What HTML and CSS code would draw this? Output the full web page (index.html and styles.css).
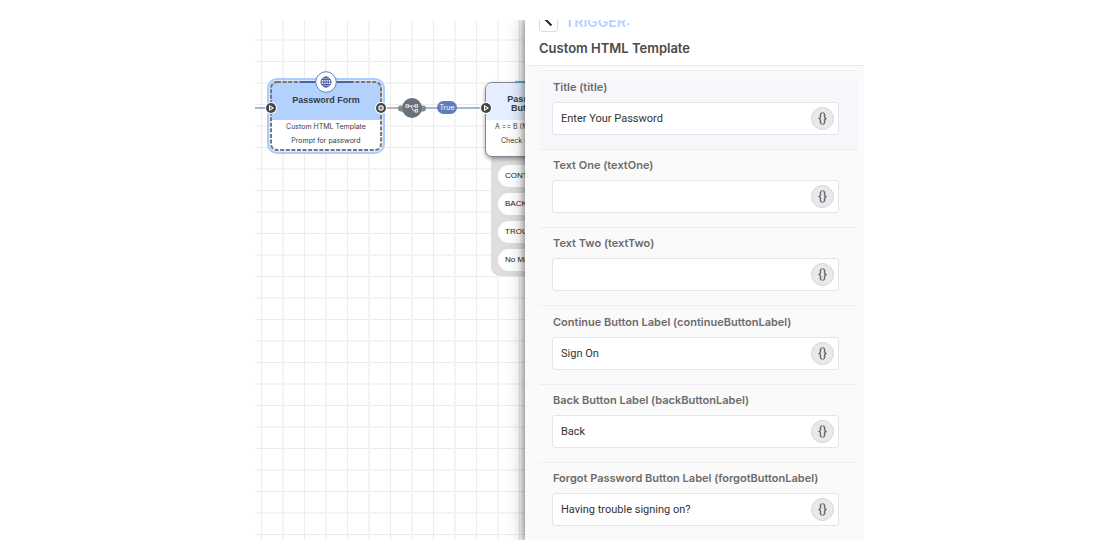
FILE: index.html
```html
<!DOCTYPE html>
<html lang="en">
<head>
<meta charset="utf-8">
<title>Flow editor</title>
<link rel="stylesheet" href="styles.css">
</head>
<body>
<main class="frame">
  <section class="canvas" aria-label="Flow canvas">
    <span class="wire wire-in"></span>
    <span class="wire wire-out"></span>
    <span class="wire wire-true"></span>

    <article class="node node-form">
      <header class="node-head">Password Form</header>
      <p class="node-line">Custom HTML Template</p>
      <p class="node-line">Prompt for password</p>
    </article>
    <svg class="dashes" viewBox="0 0 112 70" aria-hidden="true">
      <rect x="1" y="1" width="110" height="68" rx="6" fill="none" stroke="#74787e" stroke-width="2" stroke-dasharray="4 1.6"/>
    </svg>
    <span class="accent accent-form"></span>
    <svg class="globe" viewBox="0 0 22 22" aria-hidden="true">
      <circle cx="11" cy="11" r="10.3" fill="#fff" stroke="#6480bd" stroke-width="1"/>
      <g fill="none" stroke="#4257ab" stroke-width="1">
        <circle cx="11" cy="11" r="5"/>
        <ellipse cx="11" cy="11" rx="2.3" ry="5"/>
        <path d="M11 6v10M6 11h10M6.8 8.4h8.4M6.8 13.6h8.4"/>
      </g>
    </svg>

    <ul class="branches">
      <li class="branch">CONTINUE</li>
      <li class="branch">BACK</li>
      <li class="branch">TROUBLE</li>
      <li class="branch">No Match</li>
    </ul>
    <article class="node node-branch">
      <header class="node-head">Password Form<br>Button Values</header>
      <p class="node-line node-rule">A == B (Multiple Branch)</p>
      <p class="node-line node-note">Check which button</p>
    </article>
    <span class="accent accent-branch"></span>

    <svg class="port port-in" viewBox="0 0 12 12" aria-hidden="true">
      <circle cx="6" cy="6" r="6" fill="#fff"/><circle cx="6" cy="6" r="5" fill="#444"/>
      <path d="M4.5 3.6v4.8L8.4 6z" fill="#777" stroke="#fff" stroke-width="1"/>
    </svg>
    <svg class="port port-out" viewBox="0 0 12 12" aria-hidden="true">
      <circle cx="6" cy="6" r="6" fill="#fff"/><circle cx="6" cy="6" r="5" fill="#444"/>
      <circle cx="6" cy="6" r="2.2" fill="#777" stroke="#fff" stroke-width="1.1"/>
    </svg>
    <svg class="port port-next" viewBox="0 0 12 12" aria-hidden="true">
      <circle cx="6" cy="6" r="6" fill="#fff"/><circle cx="6" cy="6" r="5" fill="#444"/>
      <path d="M4.5 3.6v4.8L8.4 6z" fill="#777" stroke="#fff" stroke-width="1"/>
    </svg>

    <svg class="splitter" viewBox="0 0 28 20" aria-hidden="true">
      <rect x="0" y="7.4" width="28" height="6" rx="2.4" fill="#8b8b8b"/>
      <circle cx="14" cy="10" r="10" fill="#69717b"/>
      <g fill="none" stroke="#e8eaec" stroke-width="1">
        <rect x="8" y="6.8" width="2.4" height="2.4"/>
        <rect x="17.2" y="6.8" width="2.4" height="2.4"/>
        <rect x="17.2" y="11.6" width="2.4" height="2.4"/>
        <path d="M10.4 8H17.2M12.4 8c1.6 0 1.6 4.8 3.4 4.8h1.4"/>
      </g>
    </svg>
    <span class="tag">True</span>
  </section>

  <aside class="panel">
    <header class="panel-head">
      <div class="crumb">
        <button class="back" type="button" aria-label="Back">
          <svg viewBox="0 0 17 17" aria-hidden="true"><path d="M11.5 .5L6 6l5.5 5.5" fill="none" stroke="#222" stroke-width="2"/></svg>
        </button>
        <span class="kind">TRIGGER:</span>
      </div>
      <h1 class="panel-title">Custom HTML Template</h1>
    </header>
    <form class="fields">
      <div class="field field-active">
        <label class="label" for="title">Title (title)</label>
        <div class="box"><input class="input" id="title" type="text" value="Enter Your Password"><button class="braces" type="button" aria-label="Insert variable">{}</button></div>
      </div>
      <div class="field">
        <label class="label" for="textOne">Text One (textOne)</label>
        <div class="box"><input class="input" id="textOne" type="text"><button class="braces" type="button" aria-label="Insert variable">{}</button></div>
      </div>
      <div class="field">
        <label class="label" for="textTwo">Text Two (textTwo)</label>
        <div class="box"><input class="input" id="textTwo" type="text"><button class="braces" type="button" aria-label="Insert variable">{}</button></div>
      </div>
      <div class="field">
        <label class="label" for="continueLabel">Continue Button Label (continueButtonLabel)</label>
        <div class="box"><input class="input" id="continueLabel" type="text" value="Sign On"><button class="braces" type="button" aria-label="Insert variable">{}</button></div>
      </div>
      <div class="field">
        <label class="label" for="backLabel">Back Button Label (backButtonLabel)</label>
        <div class="box"><input class="input" id="backLabel" type="text" value="Back"><button class="braces" type="button" aria-label="Insert variable">{}</button></div>
      </div>
      <div class="field">
        <label class="label" for="forgotLabel">Forgot Password Button Label (forgotButtonLabel)</label>
        <div class="box"><input class="input" id="forgotLabel" type="text" value="Having trouble signing on?"><button class="braces" type="button" aria-label="Insert variable">{}</button></div>
      </div>
    </form>
  </aside>
</main>
</body>
</html>
```
FILE: styles.css
```css
* { box-sizing: border-box; }

body {
  margin: 0;
  padding: 20px 0;
  height: 100vh;
  display: grid;
  grid-template-columns: 255fr 609fr 256fr;
  grid-template-rows: minmax(0, 1fr);
  background: #fff;
  font-family: Inter, "Liberation Sans", sans-serif;
}

.frame {
  grid-column: 2;
  display: flex;
  overflow: hidden;
}

/* Flow canvas */
.canvas {
  position: relative;
  flex: 1;
  min-width: 0;
  background-color: #fff;
  background-image:
    linear-gradient(90deg, #ececec 1px, transparent 1px),
    linear-gradient(90deg, #f4f4f4 2px, transparent 2px),
    linear-gradient(#ececec 1px, transparent 1px),
    linear-gradient(#f4f4f4 2px, transparent 2px);
  background-size: 43px 43px;
  background-position: 6px 0, 27px 0, 0 41px, 0 19px;
  font-family: "Liberation Sans", Arial, sans-serif;
  color: #333d4a;
}

.wire { position: absolute; height: 2px; top: 87px; background: #a5b7dc; }
.wire-in { left: 0; width: 12px; }
.wire-out { left: 130px; width: 18px; background: #b5b5b5; }
.wire-true { left: 166px; width: 60px; }

.node {
  position: absolute;
  width: 112px;
  background: #fff;
  border-radius: 7px;
  text-align: center;
  white-space: nowrap;
}
.node-form {
  left: 15px;
  top: 61px;
  height: 70px;
  box-shadow: 0 0 0 1px #e4e8ee, 0 0 0 3px #a9cbff;
}
.dashes { position: absolute; left: 15px; top: 61px; width: 112px; height: 70px; }
.node-branch {
  left: 230px;
  top: 62px;
  height: 75px;
  border: 1px solid #7f8894;
  box-shadow: 0 2px 4px rgba(0, 0, 0, .35);
}
.node-head {
  display: flex;
  align-items: center;
  justify-content: center;
  height: 39px;
  border-radius: 6px 6px 0 0;
  background: #b3d1fd;
  font-size: 9px;
  line-height: 9px;
  font-weight: 700;
}
.node-branch .node-head { height: 37px; padding-top: 5px; background: #e6efff; }
.node-line {
  margin: 0;
  font-family: Inter, "Liberation Sans", sans-serif;
  font-size: 7px;
  line-height: 14px;
}
.node-rule, .node-note { text-align: left; }
.node-rule { padding-left: 9px; }
.node-note { padding-left: 15px; }

.accent { position: absolute; top: 61px; height: 2px; }
.accent-form { left: 45px; width: 53px; background: #4166b4; }
.accent-branch { left: 260px; width: 53px; background: #5ba3d9; }
.globe { position: absolute; left: 60px; top: 51px; width: 22px; height: 22px; }

.port { position: absolute; top: 82px; width: 12px; height: 12px; }
.port-in { left: 10px; }
.port-out { left: 120px; }
.port-next { left: 225px; }

.splitter { position: absolute; left: 143px; top: 78px; width: 28px; height: 20px; }
.tag {
  position: absolute;
  left: 182px;
  top: 81px;
  width: 20px;
  height: 13px;
  border-radius: 7px;
  background: #5e7db9;
  color: #fff;
  font-family: Inter, "Liberation Sans", sans-serif;
  font-size: 7px;
  line-height: 13px;
  text-align: center;
}

.branches {
  position: absolute;
  left: 236px;
  top: 130px;
  width: 100px;
  margin: 0;
  padding: 15px 7px 5px;
  display: grid;
  gap: 6px;
  list-style: none;
  background: #dedede;
  border-radius: 9px;
}
.branch {
  height: 22px;
  padding-left: 7px;
  border-radius: 11px;
  background: #fff;
  font-size: 8px;
  line-height: 22px;
  color: #222;
}

/* Settings panel */
.panel {
  position: relative;
  display: flex;
  flex-direction: column;
  flex: 0 0 339px;
  background: #fafafa;
  box-shadow: 0 0 6px 2px rgba(0, 0, 0, .3), 0 0 18px rgba(0, 0, 0, .3);
}
.panel-head {
  margin-top: -7px;
  padding: 0 14px 9px;
  border-bottom: 1px solid #ebebeb;
  background: #fff;
}
.crumb { display: flex; align-items: center; gap: 7px; height: 18px; }
.back {
  width: 19px;
  height: 19px;
  padding: 0;
  border: 1px solid #d9dbe0;
  border-radius: 3px;
  background: #fff;
}
.back svg { display: block; }
.kind { font-size: 14px; line-height: 16px; font-weight: 600; color: #b5d2ff; }
.panel-title {
  margin: 9px 0 0;
  font-size: 13px;
  line-height: 16px;
  font-weight: 600;
  color: #4a4a4a;
}

.fields {
  flex: 1;
  display: flex;
  flex-direction: column;
  justify-content: space-between;
  margin: 4px 6px 0 14px;
  padding-top: 8px;
  border-top: 1px solid #efeff1;
}
.field { padding: 7px 19px 14px 13px; border-bottom: 1px solid #ededf3; }
.field:last-child { border-bottom: 0; }
.field-active { padding-top: 0; background: #f6f6fb; }
.label {
  display: block;
  margin: 0 0 7px 1px;
  font-size: 11px;
  line-height: 16px;
  font-weight: 600;
  color: #6c6c6c;
}
.box {
  display: flex;
  align-items: center;
  height: 33px;
  padding: 0 4px 0 8px;
  border: 1px solid #e5e5e8;
  border-radius: 3px;
  background: #fff;
}
.input {
  flex: 1;
  min-width: 0;
  padding: 1px 0 0;
  border: 0;
  outline: 0;
  background: none;
  font-family: Roboto, "Liberation Sans", sans-serif;
  font-size: 11px;
  line-height: 16px;
  color: #333;
}
.braces {
  width: 23px;
  height: 23px;
  padding: 0 0 1px;
  border: 1px solid #d6d6d6;
  border-radius: 50%;
  background: #e9e9e9;
  font-family: Roboto, "Liberation Sans", sans-serif;
  font-size: 13px;
  line-height: 16px;
  color: #555;
}
```
